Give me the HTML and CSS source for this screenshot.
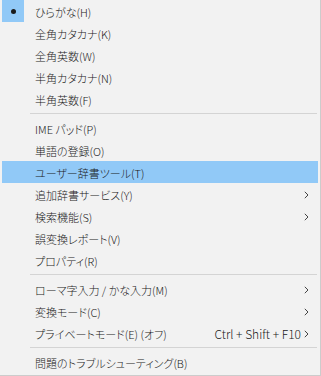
FILE: index.html
```html
<!DOCTYPE html>
<html lang="ja">
<head>
<meta charset="utf-8">
<link rel="stylesheet" href="styles.css">
</head>
<body>
<div class="menu">
  <div class="item checked"><span class="icon"><span class="dot"></span></span><span class="label">ひらがな(H)</span></div>
  <div class="item"><span class="icon"></span><span class="label">全角カタカナ(K)</span></div>
  <div class="item"><span class="icon"></span><span class="label">全角英数(W)</span></div>
  <div class="item"><span class="icon"></span><span class="label">半角カタカナ(N)</span></div>
  <div class="item"><span class="icon"></span><span class="label">半角英数(F)</span></div>
  <div class="sep"></div>
  <div class="item"><span class="icon"></span><span class="label">IME パッド(P)</span></div>
  <div class="item"><span class="icon"></span><span class="label">単語の登録(O)</span></div>
  <div class="item hover"><span class="icon"></span><span class="label">ユーザー辞書ツール(T)</span></div>
  <div class="item"><span class="icon"></span><span class="label">追加辞書サービス(Y)</span><span class="arrow"><svg width="5" height="8" viewBox="0 0 5 8"><path d="M0.8 0.8 L4 4 L0.8 7.2" fill="none" stroke="#444" stroke-width="1"/></svg></span></div>
  <div class="item"><span class="icon"></span><span class="label">検索機能(S)</span><span class="arrow"><svg width="5" height="8" viewBox="0 0 5 8"><path d="M0.8 0.8 L4 4 L0.8 7.2" fill="none" stroke="#444" stroke-width="1"/></svg></span></div>
  <div class="item"><span class="icon"></span><span class="label">誤変換レポート(V)</span></div>
  <div class="item"><span class="icon"></span><span class="label">プロパティ(R)</span></div>
  <div class="sep"></div>
  <div class="item"><span class="icon"></span><span class="label">ローマ字入力 / かな入力(M)</span><span class="arrow"><svg width="5" height="8" viewBox="0 0 5 8"><path d="M0.8 0.8 L4 4 L0.8 7.2" fill="none" stroke="#444" stroke-width="1"/></svg></span></div>
  <div class="item"><span class="icon"></span><span class="label">変換モード(C)</span><span class="arrow"><svg width="5" height="8" viewBox="0 0 5 8"><path d="M0.8 0.8 L4 4 L0.8 7.2" fill="none" stroke="#444" stroke-width="1"/></svg></span></div>
  <div class="item"><span class="icon"></span><span class="label">プライベートモード(E) (オフ)</span><span class="shortcut">Ctrl + Shift + F10</span><span class="arrow"><svg width="5" height="8" viewBox="0 0 5 8"><path d="M0.8 0.8 L4 4 L0.8 7.2" fill="none" stroke="#444" stroke-width="1"/></svg></span></div>
  <div class="sep"></div>
  <div class="item"><span class="icon"></span><span class="label">問題のトラブルシューティング(B)</span></div>
</div>
</body>
</html>
```
FILE: styles.css
```css
html, body {
  margin: 0;
  padding: 0;
  background: #f2f2f2;
}
.menu {
  box-sizing: border-box;
  width: 321px;
  height: 376px;
  background: #f2f2f2;
  border-right: 1px solid #cccccc;
  border-bottom: 1px solid #cccccc;
  padding: 0 2px 2px 2px;
  font-family: "Noto Sans CJK JP", "Noto Sans", sans-serif;
  font-size: 11px;
  font-weight: 300;
  font-feature-settings: "palt";
  color: #1a1a1a;
  display: flex;
  flex-direction: column;
}
.item {
  height: 22px;
  display: flex;
  align-items: center;
}
.item.hover {
  background: #91c9f7;
}
.icon {
  width: 22px;
  height: 22px;
  flex: none;
  margin-right: 11px;
  display: flex;
  align-items: center;
  justify-content: center;
}
.checked .icon {
  background: #91c9f7;
}
.dot {
  width: 5px;
  height: 5px;
  border-radius: 50%;
  background: #1a1a1a;
}
.label {
  flex: 1;
  white-space: nowrap;
  line-height: 22px;
  padding-top: 1px;
}
.shortcut {
  white-space: nowrap;
  margin-right: 3px;
  line-height: 22px;
  padding-top: 1px;
  font-size: 12px;
}
.arrow {
  width: 14px;
  flex: none;
  display: flex;
  align-items: center;
  padding-top: 1px;
}
.arrow svg {
  display: block;
}
.sep {
  height: 1px;
  background: #d4d4d4;
  margin: 3px 1px 3px 28px;
  flex: none;
}
```
